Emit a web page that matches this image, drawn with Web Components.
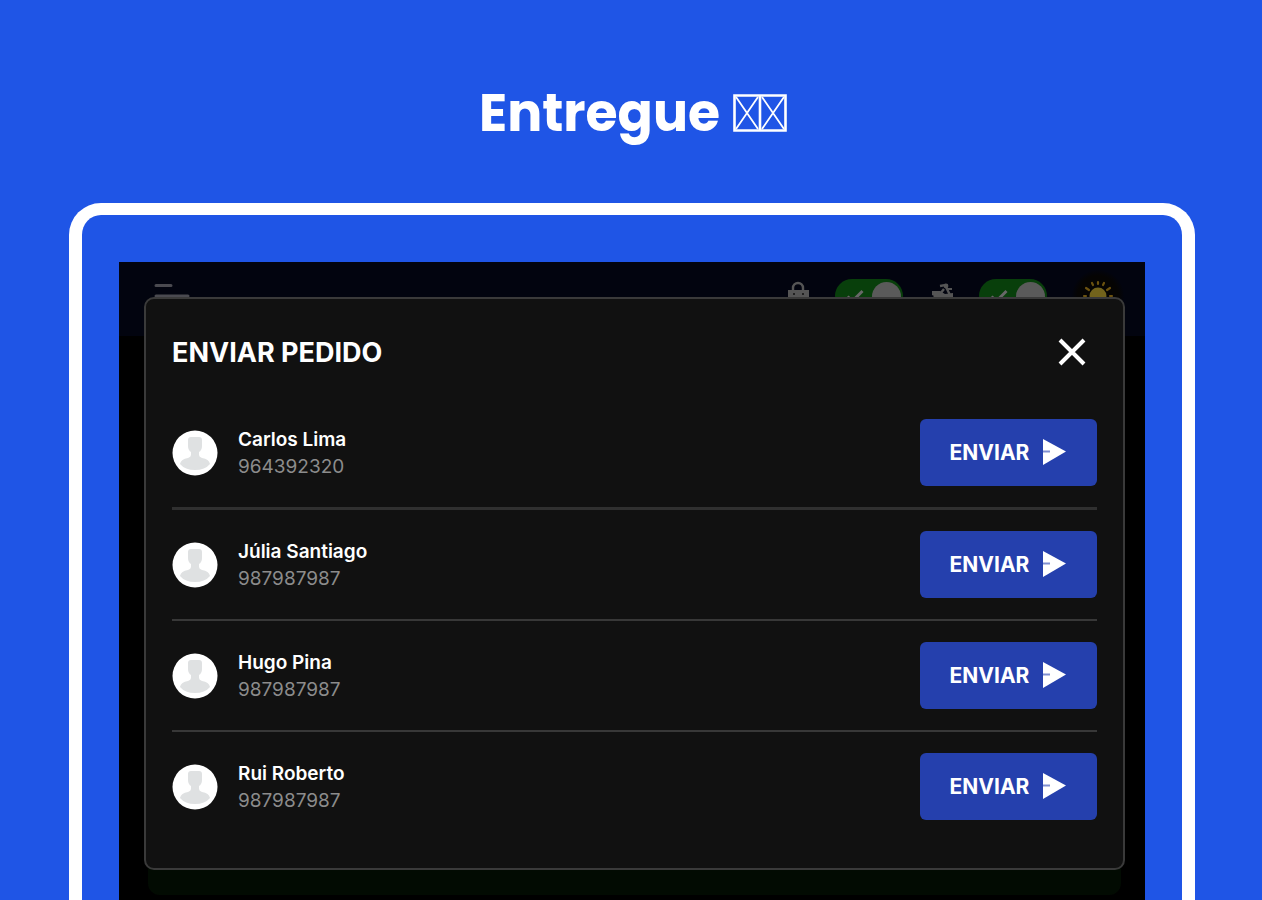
<!DOCTYPE html>
<html lang="pt">
<head>
<meta charset="utf-8">
<meta name="viewport" content="width=device-width, initial-scale=1">
<title>Entregue</title>
<style>
html, body { margin: 0; height: 100%; background: #1f55e6; }
body { font-family: Inter, "Liberation Sans", sans-serif; color: #fff; }
</style>
</head>
<body>
<promo-page>
  <span slot="title">Entregue</span>
  <app-screen>
    <send-dialog heading="ENVIAR PEDIDO">
      <courier-row name="Carlos Lima" phone="964392320" first></courier-row>
      <courier-row name="Júlia Santiago" phone="987987987"></courier-row>
      <courier-row name="Hugo Pina" phone="987987987"></courier-row>
      <courier-row name="Rui Roberto" phone="987987987" last></courier-row>
    </send-dialog>
  </app-screen>
</promo-page>

<script>
function define(tag, html, setup) {
  const template = document.createElement('template');
  template.innerHTML = html;
  customElements.define(tag, class extends HTMLElement {
    constructor() {
      super();
      this.attachShadow({ mode: 'open' }).append(template.content.cloneNode(true));
    }
    connectedCallback() { if (setup) setup(this, this.shadowRoot); }
  });
}

define('promo-page', `
<style>
:host { display: flex; flex-direction: column; min-height: 100%; }
header { display: flex; justify-content: center; align-items: center; gap: 13px; height: 203px; padding: 23px 0 0 4px; box-sizing: border-box; }
h1 { margin: 0; font: 700 52px/64px Poppins, Inter, sans-serif; }
svg { display: block; width: 54px; height: 38px; }
main { flex: 1; display: flex; margin: 0 67px 0 69px; padding: 47px 37px 0; border: 13px solid #fff; border-top-width: 12px; border-bottom: 0; border-radius: 32px 32px 0 0; }
::slotted(app-screen) { flex: 1; min-width: 0; }
</style>
<header>
  <h1><slot name="title"></slot></h1>
  <svg viewBox="0 0 54 38" fill="none" stroke="#fff" aria-hidden="true">
    <path stroke-width="2.6" d="M1.5 1.5h51v35h-51zM27 1.5v35"/>
    <path stroke-width="1.8" d="M3 3l22 32M25 3L3 35M29 3l22 32M51 3L29 35"/>
  </svg>
</header>
<main><slot></slot></main>`);

define('toggle-switch', `
<style>
:host { display: block; }
label { display: block; }
input { appearance: none; display: flex; align-items: center; justify-content: flex-end; box-sizing: border-box; width: 68px; height: 34px; margin: 0; padding: 0 2px; border-radius: 17px;
  background: #083f0b url("data:image/svg+xml,%3Csvg xmlns='http://www.w3.org/2000/svg' viewBox='0 0 18 14' fill='none' stroke='%23686868' stroke-width='3'%3E%3Cpath d='M1.500 7.500l5 4.500L16.500 2'/%3E%3C/svg%3E") 11px 10px / 18px 14px no-repeat; }
input::after { content: ""; width: 29px; height: 29px; border-radius: 50%; background: #5a5a5a; }
</style>
<label><input type="checkbox" checked></label>`, (el, root) => {
  root.querySelector('input').setAttribute('aria-label', el.getAttribute('label'));
});

define('app-bar', `
<style>
:host { display: flex; align-items: center; gap: 25px; box-sizing: border-box; height: 74px; padding: 0 21px 6px 35px; background: #02040f; }
button { padding: 0; border: 0; background: none; }
svg { display: block; }
.menu { margin-right: auto; }
.theme { display: grid; place-items: center; width: 52px; height: 52px; border-radius: 50%; background: radial-gradient(#050403 55%, transparent 72%); }
</style>
<button class="menu" aria-label="Menu"><svg width="36" height="28" viewBox="0 0 36 28" stroke="#4a4a50" stroke-width="3" stroke-linecap="round"><path d="M2 3.500h15M2 14h32M2 25h24"/></svg></button>
<svg width="24" height="30" viewBox="0 0 24 30" aria-hidden="true"><path d="M7 12V7a5 5 0 0 1 10 0v5" fill="none" stroke="#555" stroke-width="2.400"/><path fill="#555" d="M2 9h21v18H2z"/><circle cx="8" cy="13" r="1" fill="#111"/><circle cx="17" cy="13" r="1" fill="#111"/></svg>
<toggle-switch label="Levantamento"></toggle-switch>
<svg width="26" height="26" viewBox="0 0 26 26" aria-hidden="true"><path d="M12 3l5-1 3 6 3 6M16 6l-4 5 5 3" fill="none" stroke="#555" stroke-width="2.400"/><circle cx="18" cy="3" r="2.400" fill="#555"/><path fill="#555" d="M4 8h8l5 3 8-1v4l-6 2-4 6H5l-2-6 3-3-2-1z"/><path stroke="#555" stroke-width="2" d="M19 6h5"/><circle cx="7" cy="20" r="4" fill="#555"/><circle cx="21" cy="20" r="4" fill="#555"/></svg>
<toggle-switch label="Entregas"></toggle-switch>
<button class="theme" aria-label="Tema claro"><svg width="32" height="32" viewBox="0 0 32 32" stroke="#6b5210" stroke-width="2.200" stroke-linecap="round"><path d="M16 2v2M16 28v2M2 16h2M28 16h2M4 8l3 2M25 22l3 2M28 8l-3 2M7 22l-3 2M10 3l1 2M22 3l-1 2"/><circle cx="16" cy="16" r="8.500" fill="#72631c" stroke="none"/></svg></button>`);

define('app-screen', `
<style>
:host { display: grid; background: #000; }
.back, .overlay { grid-area: 1 / 1; min-width: 0; }
.back { display: flex; flex-direction: column; }
.order { flex: 1; margin: 0 24px 5px 29px; border-radius: 0 0 12px 12px; background: linear-gradient(transparent 80%, #020b02 80%); }
.overlay { padding: 35px 20px 30px 25px; }
</style>
<div class="back"><app-bar></app-bar><div class="order"></div></div>
<div class="overlay"><slot></slot></div>`);

define('send-dialog', `
<style>
:host { display: block; position: relative; padding: 26px 26px 27px; border: 2px solid #3a3a3a; border-radius: 10px; background: #111; }
header { display: flex; align-items: center; justify-content: space-between; height: 53px; margin-bottom: 20px; padding-right: 10px; }
h2 { margin: 0; padding-top: 2px; font-size: 27px; line-height: 32px; font-weight: 700; }
button { padding: 0; border: 0; background: none; }
svg { display: block; }
</style>
<header><h2></h2><button aria-label="Fechar"><svg width="30" height="30" viewBox="0 0 30 30" stroke="#fff" stroke-width="4"><path d="M3 3l24 24M27 3L3 27"/></svg></button></header>
<slot></slot>`, (el, root) => {
  root.querySelector('h2').textContent = el.getAttribute('heading');
});

define('courier-row', `
<style>
:host { display: flex; align-items: center; height: 109px; border-bottom: 2px solid #383838; }
:host([first]) { border-bottom: 3px solid #303030; }
:host([last]) { border-bottom: 0; }
svg { display: block; flex: none; }
.who { flex: 1; margin-left: 20px; font-size: 19px; line-height: 27px; }
.name { font-weight: 600; color: #fff; }
.phone { color: #8c8c8c; }
p { margin: 0; }
button { display: flex; align-items: center; justify-content: center; gap: 13px; width: 177px; height: 67px; padding: 0; border: 0; border-radius: 6px; background: #2540ad; color: #fff; font: 700 21px/28px Inter, sans-serif; }
</style>
<svg width="46" height="46" viewBox="0 0 46 46" aria-hidden="true"><circle cx="23" cy="23" r="22.500" fill="#fff"/><path fill="#dfe1e2" d="M16 10q0-3 3-3h8q3 0 3 3v6q0 4-3 6v3q0 2 3 3 7 1 8 6-5 6-15 6T8 34q1-5 8-6 3-1 3-3v-3q-3-2-3-6z"/></svg>
<div class="who"><p class="name"></p><p class="phone"></p></div>
<button><span>ENVIAR</span><svg width="25" height="28" viewBox="0 0 25 28" aria-hidden="true"><path fill="#fff" d="M1 0l23 12.500L1 26z"/><path stroke="#7f8fd0" stroke-width="2" d="M1 12.500h7"/></svg></button>`, (el, root) => {
  root.querySelector('.name').textContent = el.getAttribute('name');
  root.querySelector('.phone').textContent = el.getAttribute('phone');
});
</script>
</body>
</html>
